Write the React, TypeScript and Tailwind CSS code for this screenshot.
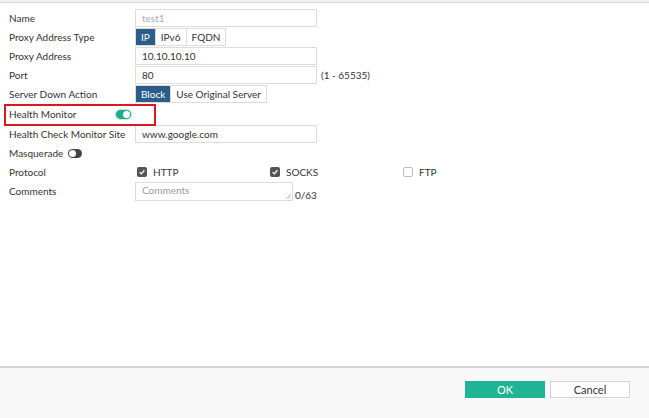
import type { ReactNode } from 'react'

const FONT = { fontFamily: 'Lato, "Open Sans", sans-serif' }

function Row({ label, children, tall }: { label: ReactNode; children?: ReactNode; tall?: boolean }) {
  return (
    <div className={`flex items-start ${tall ? 'h-[20px]' : 'h-[19px]'}`}>
      <div className="w-[126px] shrink-0 whitespace-nowrap pt-[1px] leading-[16px]">{label}</div>
      <div className="flex items-start">{children}</div>
    </div>
  )
}

function TextBox({ value, muted }: { value: string; muted?: boolean }) {
  return (
    <div
      className={`h-[18px] w-[182px] border border-[#dcdcdc] bg-white px-[6px] leading-[16px] ${
        muted ? 'text-[#aaa]' : 'text-[#333]'
      }`}
    >
      {value}
    </div>
  )
}

function Segmented({ items, active }: { items: string[]; active: number }) {
  return (
    <div className="flex h-[18px] border border-[#dcdcdc]">
      {items.map((it, i) => (
        <div
          key={it}
          className={`px-[5px] leading-[16px] ${i > 0 ? 'border-l border-[#dcdcdc]' : ''} ${
            i === active ? 'bg-[#2a5d8a] text-white' : 'bg-white text-[#333]'
          }`}
        >
          {it}
        </div>
      ))}
    </div>
  )
}

function Check({ checked, label }: { checked: boolean; label: string }) {
  return (
    <div className="flex w-[133px] items-center gap-[6px] pl-[2px] pt-[3px]">
      {checked ? (
        <span className="flex h-[10px] w-[10px] items-center justify-center rounded-[2px] bg-[#555]">
          <svg viewBox="0 0 10 10" className="h-[8px] w-[8px]">
            <path d="M2 5.2 L4.2 7.3 L8 2.8" fill="none" stroke="#fff" strokeWidth="1.6" />
          </svg>
        </span>
      ) : (
        <span className="h-[10px] w-[10px] rounded-[2px] border border-[#bbb] bg-white" />
      )}
      <span className="leading-[12px]">{label}</span>
    </div>
  )
}

export default function App() {
  return (
    <div style={FONT} className="flex h-[418px] w-[649px] flex-col bg-white text-[10px] text-[#333]">
      <div className="h-[3px] border-b border-[#d6d6d6] bg-[#efefef]" />

      <div className="flex-1 pl-[9px] pt-[6px]">
        <Row label="Name">
          <TextBox value="test1" muted />
        </Row>
        <Row label="Proxy Address Type">
          <Segmented items={['IP', 'IPv6', 'FQDN']} active={0} />
        </Row>
        <Row label="Proxy Address">
          <TextBox value="10.10.10.10" />
        </Row>
        <Row label="Port">
          <TextBox value="80" />
          <span className="ml-[4px] pt-[1px] leading-[16px]">(1 - 65535)</span>
        </Row>
        <Row label="Server Down Action" tall>
          <Segmented items={['Block', 'Use Original Server']} active={0} />
        </Row>

        <div className="relative">
          <Row label="Health Monitor" tall>
            <div className="-ml-[20px] mt-[4px] flex h-[11px] w-[17px] items-center justify-end rounded-full border border-[#cfe9e0] bg-[#1fae88] pr-[1px]">
              <span className="h-[7px] w-[7px] rounded-full bg-white" />
            </div>
          </Row>
          <div className="pointer-events-none absolute -left-[5px] -top-[1px] h-[22px] w-[152px] border-2 border-[#d9191f]" />
        </div>

        <Row label="Health Check Monitor Site">
          <TextBox value="www.google.com" />
        </Row>
        <Row
          label={
            <span className="flex items-center gap-[5px]">
              Masquerade
              <span className="flex h-[9px] w-[14px] items-center rounded-full bg-[#444] pl-[1px]">
                <span className="h-[7px] w-[7px] rounded-full bg-white" />
              </span>
            </span>
          }
        />
        <Row label="Protocol">
          <Check checked label="HTTP" />
          <Check checked label="SOCKS" />
          <Check checked={false} label="FTP" />
        </Row>
        <Row label="Comments">
          <div className="relative h-[19px] w-[158px] border border-[#dcdcdc] bg-white px-[6px] leading-[15px] text-[#999]">
            Comments
            <svg viewBox="0 0 6 6" className="absolute bottom-[1px] right-[1px] h-[6px] w-[6px]">
              <path d="M1 6 L6 1 M3.5 6 L6 3.5" stroke="#aaa" strokeWidth="0.8" />
            </svg>
          </div>
          <span className="ml-[2px] pt-[6px] leading-[14px]">0/63</span>
        </Row>
      </div>

      <div className="h-[52px] border-t-2 border-[#d4d4d4] bg-[#f8f8f8]">
        <div className="flex justify-end gap-[5px] pr-[19px] pt-[13px]">
          <button className="h-[17px] w-[80px] bg-[#1fb594] text-[11px] leading-[17px] text-white">OK</button>
          <button className="h-[17px] w-[80px] border border-[#d4d4d4] bg-white text-[11px] leading-[15px] text-[#333]">
            Cancel
          </button>
        </div>
      </div>
    </div>
  )
}
